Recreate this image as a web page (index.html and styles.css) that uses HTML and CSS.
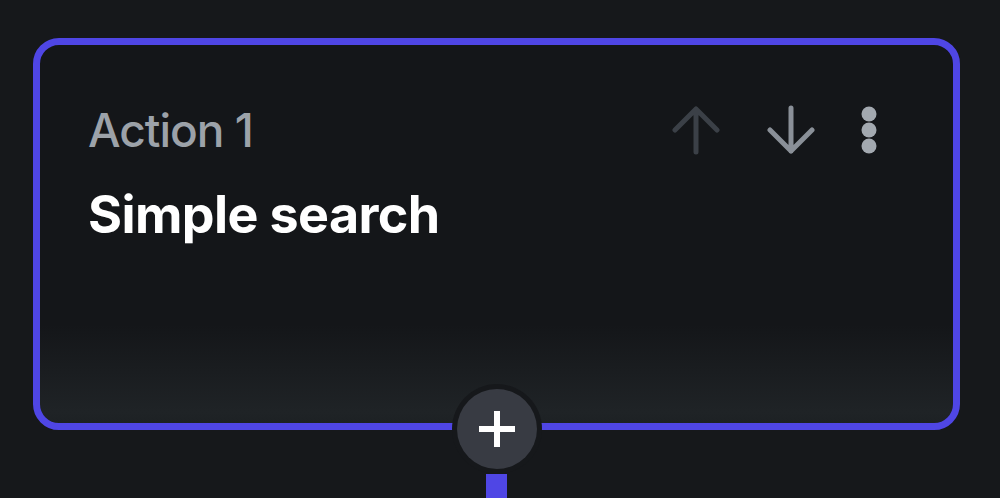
FILE: index.html
```html
<!DOCTYPE html>
<html lang="en">
<head>
<meta charset="utf-8">
<title>Action node</title>
<link rel="stylesheet" href="styles.css">
</head>
<body>
<div class="node">
  <div class="card">
    <div class="card-head">
      <span class="label">Action 1</span>
      <div class="tools">
        <svg class="icon arrow disabled" width="48" height="50" viewBox="0 0 48 50" aria-hidden="true">
          <path d="M24 4 V47 M3 25 L24 4 L45 25" fill="none" stroke="currentColor" stroke-width="5" stroke-linecap="round" stroke-linejoin="round"/>
        </svg>
        <svg class="icon arrow" width="48" height="50" viewBox="0 0 48 50" aria-hidden="true">
          <path d="M24 3 V46 M3 25 L24 46 L45 25" fill="none" stroke="currentColor" stroke-width="5" stroke-linecap="round" stroke-linejoin="round"/>
        </svg>
        <svg class="icon kebab" width="16" height="50" viewBox="0 0 16 50" aria-hidden="true">
          <circle cx="8" cy="9" r="7.5" fill="currentColor"/>
          <circle cx="8" cy="25" r="7.5" fill="currentColor"/>
          <circle cx="8" cy="41" r="7.5" fill="currentColor"/>
        </svg>
      </div>
    </div>
    <div class="title">Simple search</div>
  </div>
  <button class="add" type="button" aria-label="Add action">
    <svg width="40" height="40" viewBox="0 0 40 40" aria-hidden="true">
      <path d="M20 2 V38 M2 20 H38" stroke="#ffffff" stroke-width="6"/>
    </svg>
  </button>
  <div class="stem"></div>
</div>
</body>
</html>
```

FILE: styles.css
```css
html, body {
  margin: 0;
  padding: 0;
  height: 100%;
  background: #16181b;
  overflow: hidden;
}

body {
  font-family: Inter, "Noto Sans", sans-serif;
}

.node {
  width: 927px;
  margin: 38px 0 0 33px;
  display: flex;
  flex-direction: column;
  align-items: center;
}

.card {
  box-sizing: border-box;
  width: 100%;
  height: 392px;
  border: 7px solid #4f46e5;
  border-radius: 26px;
  padding: 60px 76px 0 48px;
  background: linear-gradient(to bottom, #141619 0%, #141619 74%, #1f2326 97%, #1d2124 100%);
}

.card-head {
  display: flex;
  align-items: center;
  justify-content: space-between;
  height: 50px;
}

.label {
  font-size: 46px;
  font-weight: 500;
  color: #9ca2a9;
  letter-spacing: -1px;
}

.tools {
  display: flex;
  align-items: center;
}

.icon {
  display: block;
}

.arrow {
  color: #8a9098;
}

.arrow.disabled {
  color: #3b4047;
  margin-right: 47px;
}

.kebab {
  color: #a3a9b0;
  margin-left: 46px;
}

.title {
  margin-top: 28px;
  font-size: 52px;
  font-weight: 700;
  color: #ffffff;
  letter-spacing: -0.6px;
}

.add {
  position: relative;
  z-index: 1;
  margin-top: -41px;
  width: 80px;
  height: 80px;
  padding: 0;
  border: none;
  border-radius: 50%;
  background: #383b43;
  box-shadow: 0 0 0 5px #16181b;
  display: flex;
  align-items: center;
  justify-content: center;
}

.add svg {
  display: block;
}

.stem {
  width: 21px;
  height: 40px;
  margin-top: 5px;
  background: #4f46e5;
}
```
